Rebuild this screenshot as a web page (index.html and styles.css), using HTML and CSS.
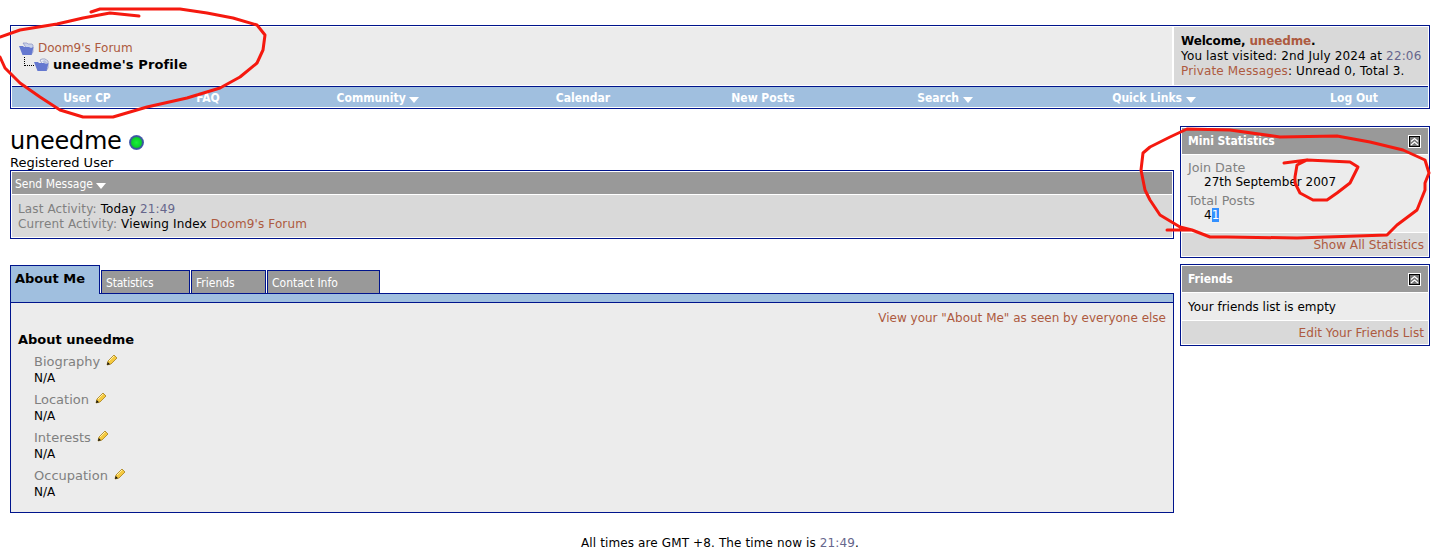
FILE: index.html
```html
<!DOCTYPE html>
<html lang="en">
<head>
    <meta charset="UTF-8">
    <title>Doom9's Forum - uneedme's Profile</title>
    <link rel="stylesheet" href="styles.css">
</head>
<body>
    <div class="navbar-box">
        <div class="top-row">
            <div class="breadcrumb">
                <div class="crumb">
                    <svg class="folder" viewBox="0 0 15 14"><path d="M4 1h4l1 1h4l1 1v7l-2 3z" fill="#c9d2ea" stroke="#8a94c4" stroke-width=".7"/><path d="M0 4h4l1 1h5l2 1 2.500-1-2 8H3.500z" fill="#6478d0"/></svg>
                    <a href="#">Doom9's Forum</a>
                </div>
                <div class="crumb crumb-sub">
                    <span class="tree-line"></span>
                    <svg class="folder" viewBox="0 0 15 14"><path d="M6 2l2-1h3l3 2v7l-2 3z" fill="#eef0f8" stroke="#7d88b8" stroke-width=".7"/><path d="M8 3l3-1 2 2v5z" fill="#b9c2de"/><path d="M0 4h4l1 1h5l2 1 2.500-1-2 8H3.500z" fill="#6478d0"/></svg>
                    <strong>uneedme's Profile</strong>
                </div>
            </div>
            <div class="welcome">
                <strong>Welcome, <a href="#">uneedme</a>.</strong><br>
                You last visited: 2nd July 2024 at <span class="time">22:06</span><br>
                <a href="#">Private Messages</a>: Unread 0, Total 3.
            </div>
        </div>
        <div class="nav-row">
            <a href="#">User CP</a>
            <a href="#">FAQ</a>
            <a href="#">Community <i class="arrow"></i></a>
            <a href="#">Calendar</a>
            <a href="#">New Posts</a>
            <a href="#">Search <i class="arrow"></i></a>
            <a href="#">Quick Links <i class="arrow"></i></a>
            <a href="#">Log Out</a>
        </div>
    </div>

    <div class="columns">
        <div class="main-col">
            <h1 class="username">uneedme <span class="online-dot"></span></h1>
            <div class="usertitle">Registered User</div>

            <div class="activity-box">
                <div class="activity-head">Send Message <i class="arrow"></i></div>
                <div class="activity-body">
                    <span class="label">Last Activity:</span> Today <span class="time">21:49</span><br>
                    <span class="label">Current Activity:</span> Viewing Index <a href="#">Doom9's Forum</a>
                </div>
            </div>

            <div class="tabs">
                <div class="tab tab-active">About Me</div>
                <div class="tab tab-stats">Statistics</div>
                <div class="tab tab-friends">Friends</div>
                <div class="tab tab-contact">Contact Info</div>
            </div>
            <div class="tab-strip"></div>
            <div class="about-box">
                <div class="about-link"><a href="#">View your "About Me" as seen by everyone else</a></div>
                <h2>About uneedme</h2>
                <dl class="fields">
                    <dt>Biography <svg class="pencil" viewBox="0 0 12 12"><path d="M1 11l1-4 6-6 3 3-6 6z" fill="#f5c93f" stroke="#a8801a" stroke-width=".8"/><path d="M3 7l5-5" stroke="#fff2b0"/><path d="M1 11l.7-3 2.300 2.300z" fill="#111"/></svg></dt>
                    <dd>N/A</dd>
                    <dt>Location <svg class="pencil" viewBox="0 0 12 12"><path d="M1 11l1-4 6-6 3 3-6 6z" fill="#f5c93f" stroke="#a8801a" stroke-width=".8"/><path d="M3 7l5-5" stroke="#fff2b0"/><path d="M1 11l.7-3 2.300 2.300z" fill="#111"/></svg></dt>
                    <dd>N/A</dd>
                    <dt>Interests <svg class="pencil" viewBox="0 0 12 12"><path d="M1 11l1-4 6-6 3 3-6 6z" fill="#f5c93f" stroke="#a8801a" stroke-width=".8"/><path d="M3 7l5-5" stroke="#fff2b0"/><path d="M1 11l.7-3 2.300 2.300z" fill="#111"/></svg></dt>
                    <dd>N/A</dd>
                    <dt>Occupation <svg class="pencil" viewBox="0 0 12 12"><path d="M1 11l1-4 6-6 3 3-6 6z" fill="#f5c93f" stroke="#a8801a" stroke-width=".8"/><path d="M3 7l5-5" stroke="#fff2b0"/><path d="M1 11l.7-3 2.300 2.300z" fill="#111"/></svg></dt>
                    <dd>N/A</dd>
                </dl>
            </div>
        </div>

        <div class="side-col">
            <div class="block">
                <div class="block-head">Mini Statistics <span class="collapse"><svg viewBox="0 0 9 9"><path d="M1 4.500l3.500-3 3.500 3M1 8l3.500-3 3.500 3" fill="none" stroke="#fff" stroke-width="1.200"/></svg></span></div>
                <div class="block-body stats-body">
                    <div class="label">Join Date</div>
                    <div class="value">27th September 2007</div>
                    <div class="label">Total Posts</div>
                    <div class="value">4<span class="selected">1</span></div>
                </div>
                <div class="block-foot"><a href="#">Show All Statistics</a></div>
            </div>
            <div class="block">
                <div class="block-head">Friends <span class="collapse"><svg viewBox="0 0 9 9"><path d="M1 4.500l3.500-3 3.500 3M1 8l3.500-3 3.500 3" fill="none" stroke="#fff" stroke-width="1.200"/></svg></span></div>
                <div class="block-body friends-body">Your friends list is empty</div>
                <div class="block-foot"><a href="#">Edit Your Friends List</a></div>
            </div>
        </div>
    </div>

    <div class="footer">All times are GMT +8. The time now is <span class="time">21:49</span>.</div>

    <!-- hand drawn marks on top of the screenshot -->
    <svg class="scribbles" viewBox="0 0 1440 547">
        <path d="M139 16L110 13 83 18 57 24 20 30 0 37M91 12L100 9 180 9 207 13 233 18 257 25 265 35 263 50 257 63 240 77 220 88 187 98 147 107 113 117 83 117 60 110 40 97 20 83 5 68 0 57"/>
        <path d="M1167 230H1192L1210 237 1227 237 1297 238 1387 235 1397 225 1417 210 1425 190 1425 183 1429 173 1425 160 1403 150 1370 142 1337 136 1280 137 1230 130 1187 129 1170 137 1150 147 1143 153 1141 170 1145 190 1150 200 1160 215 1180 227 1192 230"/>
        <path d="M1284 163L1307 160 1350 162 1358 167 1350 183 1337 193 1327 200 1313 200 1300 193 1295 183 1295 177 1297 165 1307 160"/>
    </svg>
</body>
</html>
```

FILE: styles.css
```css
* {
    margin: 0;
    padding: 0;
    box-sizing: border-box;
}

body {
    background: #fff;
    color: #000;
    font-family: 'DejaVu Sans', Verdana, sans-serif;
    font-size: 12px;
    line-height: 15px;
    padding: 25px 10px 0;
    height: 547px;
    overflow: hidden;
    position: relative;
}

a {
    color: #ad5a40;
    text-decoration: none;
}

.time {
    color: #66668c;
}

.label {
    color: #808080;
}

/* top box */
.navbar-box {
    border: 1px solid #00148c;
    background: #fff;
    padding: 1px;
}

.top-row {
    display: flex;
    height: 58px;
}

.breadcrumb {
    flex: 1;
    background: #ececec;
    padding: 13px 0 0 7px;
}

.crumb {
    display: flex;
    align-items: center;
    height: 17px;
}

.crumb a {
    margin-left: 4px;
}

.crumb strong {
    margin-left: 4px;
    font-size: 13px;
    letter-spacing: 0.12px;
}

.crumb-sub {
    padding-left: 5px;
    margin-top: -1px;
}

.tree-line {
    width: 10px;
    height: 9px;
    margin-top: -6px;
    border-left: 1px dotted #000;
    border-bottom: 1px dotted #000;
}

.folder {
    width: 15px;
    height: 14px;
}

.welcome {
    width: 254px;
    margin-left: 2px;
    background: #d9d9d9;
    padding: 7px 0 0 7px;
    letter-spacing: 0.15px;
}

.welcome strong {
    letter-spacing: -0.15px;
}

.nav-row {
    display: grid;
    grid-template-columns: 150px 92px 248px 162px 198px 166px 252px 148px;
    height: 21px;
    margin-top: 1px;
    border-top: 1px solid #00148c;
    background: #a0bfdf;
}

.nav-row a {
    color: #fff;
    font-family: 'DejaVu Sans Condensed', 'DejaVu Sans', sans-serif;
    font-weight: bold;
    text-align: center;
    line-height: 22px;
}

.arrow {
    display: inline-block;
    width: 0;
    height: 0;
    border-left: 5px solid transparent;
    border-right: 5px solid transparent;
    border-top: 6px solid #fff;
    vertical-align: -1px;
}

/* columns */
.columns {
    display: flex;
    gap: 6px;
    margin-top: 17px;
}

.main-col {
    flex: 1;
}

.side-col {
    width: 250px;
    display: flex;
    flex-direction: column;
    gap: 6px;
}

.username {
    font-size: 24px;
    font-weight: normal;
    line-height: 28px;
    padding-top: 1px;
    letter-spacing: -0.25px;
}

.online-dot {
    display: inline-block;
    width: 15px;
    height: 15px;
    border-radius: 50%;
    background: radial-gradient(circle, #19f03a 0, #0ad02a 45%, #3a50a0 58%, #6f83cc 85%, #a9b6e2 100%);
    vertical-align: -1px;
}

.usertitle {
    font-size: 13px;
    line-height: 14px;
    padding-top: 1px;
}

.activity-box {
    border: 1px solid #00148c;
    padding: 1px;
    background: #fff;
}

.activity-head {
    background: #999;
    color: #fff;
    font-family: 'DejaVu Sans Condensed', 'DejaVu Sans', sans-serif;
    height: 22px;
    line-height: 24px;
    padding-left: 3px;
}

.activity-body {
    margin-top: 1px;
    background: #d9d9d9;
    height: 42px;
    padding: 7px 0 0 6px;
    letter-spacing: 0.13px;
}

/* tabs */
.tabs {
    display: flex;
    align-items: flex-end;
    margin-top: 26px;
    gap: 1px;
    height: 28px;
}

.tab {
    border: 1px solid #00148c;
    border-bottom: 0;
    background: #999;
    color: #fff;
    font-family: 'DejaVu Sans Condensed', 'DejaVu Sans', sans-serif;
    height: 23px;
    line-height: 24px;
    padding-left: 4px;
}

.tab-active {
    position: relative;
    width: 90px;
    height: 29px;
    margin-bottom: -1px;
    background: #a0bfdf;
    color: #000;
    font-family: 'DejaVu Sans', sans-serif;
    font-size: 13px;
    font-weight: bold;
    line-height: 26px;
}

.tab-stats {
    width: 89px;
    letter-spacing: -0.2px;
}

.tab-friends {
    width: 75px;
}

.tab-contact {
    width: 113px;
}

.tab-strip {
    height: 10px;
    background: #a0bfdf;
    border: 1px solid #00148c;
}

.about-box {
    border: 1px solid #00148c;
    border-top: 0;
    background: #ececec;
    height: 210px;
    padding: 8px 7px 0;
}

.about-link {
    text-align: right;
}

.about-box h2 {
    font-size: 13px;
    line-height: 16px;
    margin-top: 6px;
}

.fields {
    margin: 6px 0 0 16px;
}

.fields dt {
    color: #808080;
    font-size: 13px;
    line-height: 16px;
}

.fields dd {
    line-height: 16px;
    margin-bottom: 6px;
}

.pencil {
    width: 12px;
    height: 12px;
    margin-left: 2px;
}

/* right hand blocks */
.block {
    border: 1px solid #00148c;
    padding: 1px;
    background: #fff;
}

.block-head {
    display: flex;
    justify-content: space-between;
    align-items: center;
    background: #999;
    color: #fff;
    font-family: 'DejaVu Sans Condensed', 'DejaVu Sans', sans-serif;
    font-weight: bold;
    height: 26px;
    padding: 1px 8px 0 6px;
}

.collapse {
    display: flex;
    width: 11px;
    height: 11px;
    margin-top: -1px;
    background: #777;
    border: 1px solid #000;
    outline: 1px solid #fff;
}

.block-body {
    background: #ececec;
    margin-top: 1px;
}

.stats-body {
    height: 77px;
    padding: 5px 0 0 6px;
}

.stats-body .label {
    font-size: 12.7px;
}

.stats-body .value {
    padding-left: 16px;
    margin-bottom: 3px;
}

.selected {
    background: #3390ff;
    color: #fff;
}

.friends-body {
    height: 27px;
    line-height: 29px;
    padding-left: 6px;
}

.block-foot {
    margin-top: 1px;
    background: #d9d9d9;
    height: 23px;
    line-height: 25px;
    text-align: right;
    padding-right: 4px;
    font-size: 12.1px;
}

.footer {
    text-align: center;
    margin-top: 25px;
    line-height: 10px;
    letter-spacing: 0.12px;
}

.scribbles {
    position: absolute;
    top: 0;
    left: 0;
    width: 1440px;
    height: 547px;
    pointer-events: none;
}

.scribbles path {
    fill: none;
    stroke: #f5190f;
    stroke-width: 3;
    stroke-linejoin: round;
    stroke-linecap: round;
}
```
